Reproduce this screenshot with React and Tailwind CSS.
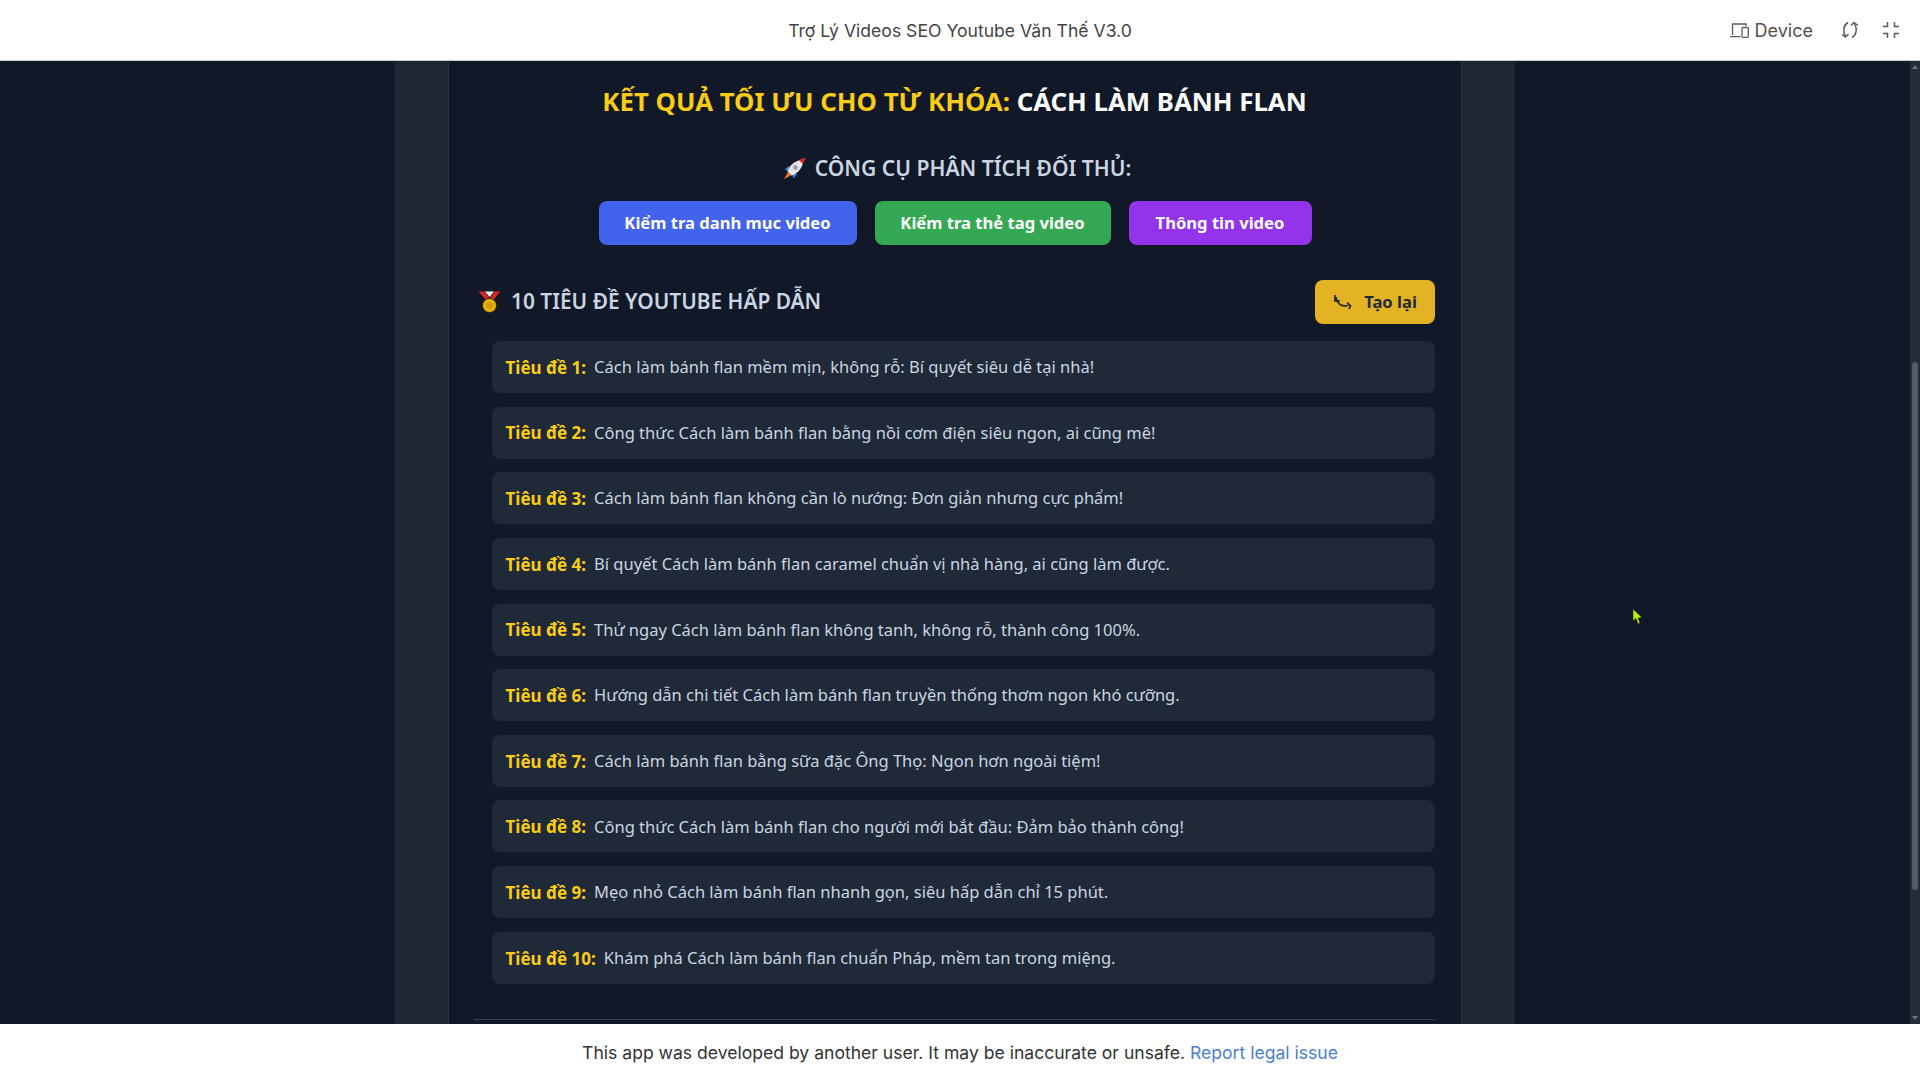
const titles = [
  "Cách làm bánh flan mềm mịn, không rỗ: Bí quyết siêu dễ tại nhà!",
  "Công thức Cách làm bánh flan bằng nồi cơm điện siêu ngon, ai cũng mê!",
  "Cách làm bánh flan không cần lò nướng: Đơn giản nhưng cực phẩm!",
  "Bí quyết Cách làm bánh flan caramel chuẩn vị nhà hàng, ai cũng làm được.",
  "Thử ngay Cách làm bánh flan không tanh, không rỗ, thành công 100%.",
  "Hướng dẫn chi tiết Cách làm bánh flan truyền thống thơm ngon khó cưỡng.",
  "Cách làm bánh flan bằng sữa đặc Ông Thọ: Ngon hơn ngoài tiệm!",
  "Công thức Cách làm bánh flan cho người mới bắt đầu: Đảm bảo thành công!",
  "Mẹo nhỏ Cách làm bánh flan nhanh gọn, siêu hấp dẫn chỉ 15 phút.",
  "Khám phá Cách làm bánh flan chuẩn Pháp, mềm tan trong miệng.",
];

function Rocket() {
  return (
    <svg viewBox="0 0 23 23" className="w-[23px] h-[23px] shrink-0">
      <path d="M5 15 L1 22 L8 18.500 Z" fill="#f97316" />
      <path d="M6 9 L1.500 12.500 L6 14 Z M14 17 L10.500 21.500 L9 17 Z" fill="#3b82f6" />
      <path d="M4.500 14.500 C6 9 11 4.500 17 3 L20 6 C18.500 12 14 17 8.500 18.500 Z" fill="#e5e7eb" />
      <path d="M16 3.200 C18 2 21 1 22.500 0.500 C22 2.500 21 5 19.800 7 Z" fill="#dc2626" />
      <circle cx="12.500" cy="10.500" r="2.400" fill="#9ca3af" />
    </svg>
  );
}

function Medal() {
  return (
    <svg viewBox="0 0 23 22" className="w-[23px] h-[22px] shrink-0">
      <path d="M0.500 0.500 H6.500 L12.500 9 H8 Z M22.500 0.500 H16.500 L10.500 9 H15 Z" fill="#dc2626" stroke="#7f1d1d" strokeWidth="0.500" />
      <path d="M7 0.500 H16 L11.500 6 Z" fill="#f3f4f6" />
      <circle cx="11.500" cy="14.500" r="7" fill="#eab308" stroke="#1c1917" strokeWidth="0.800" />
      <circle cx="11.500" cy="14.500" r="3.500" fill="#d99a07" />
    </svg>
  );
}

function DeviceIcon() {
  return (
    <svg viewBox="0 0 19 15" className="w-[19px] h-[15px]" fill="none" stroke="#5f5a55" strokeWidth="1.300">
      <path d="M2.500 12 V1 H16 V3" />
      <path d="M0 13.600 H10.500" />
      <rect x="12" y="4.500" width="6.300" height="9.800" rx="1" />
    </svg>
  );
}

function RotateIcon() {
  return (
    <svg viewBox="0 0 18 18" className="w-[18px] h-[18px]" fill="none" stroke="#5f5a55" strokeWidth="1.500">
      <path d="M7 1.500 C2.500 4 1.500 10 4.500 15.500" />
      <path d="M1 13.500 L4.500 16 L7.500 13" />
      <path d="M11 16.500 C15.500 14 16.500 8 13.500 2.500" />
      <path d="M10 4.500 L13 1.500 L17 4.500" />
    </svg>
  );
}

function MinimizeIcon() {
  return (
    <svg viewBox="0 0 18 18" className="w-[18px] h-[18px]" fill="none" stroke="#5f5a55" strokeWidth="1.500">
      <path d="M5.500 1 V5.500 H1" />
      <path d="M12.500 1 V5.500 H17" />
      <path d="M5.500 17 V12.500 H1" />
      <path d="M12.500 17 V12.500 H17" />
    </svg>
  );
}

function RegenIcon() {
  return (
    <svg viewBox="0 0 20 16" className="w-[20px] h-[16px]" fill="none" stroke="#1f2937" strokeWidth="1.700">
      <path d="M2 1 V7 H7" />
      <path d="M3 3 C4 10 9 13 15 11.500" />
      <path d="M14 8.500 L17.500 12 L16 15" />
    </svg>
  );
}

function Scrollbar() {
  return (
    <div className="w-[10px] shrink-0 bg-[#252c39] flex flex-col items-center justify-between py-[4px] relative">
      <div className="w-0 h-0 border-x-[3px] border-x-transparent border-b-[4px] border-b-[#6b7280]" />
      <div className="absolute left-[2px] top-[301px] w-[6px] h-[528px] rounded-[3px] bg-[#545b69]" />
      <div className="w-0 h-0 border-x-[3px] border-x-transparent border-t-[4px] border-t-[#6b7280]" />
    </div>
  );
}

export default function App() {
  return (
    <div className="h-screen flex flex-col overflow-hidden relative bg-white font-['Noto_Sans','Open_Sans',sans-serif]">
      <header className="h-[61px] shrink-0 bg-white border-b border-b-[#c9ccd3] flex items-center justify-center relative font-['Inter',sans-serif]">
        <div className="text-[17.600px] text-[#444] pt-[3px]">Trợ Lý Videos SEO Youtube Văn Thế V3.0</div>
        <div className="absolute right-[20px] top-0 h-full flex items-center">
          <div className="flex items-center gap-[6px] text-[18px] text-[#55504b]"><DeviceIcon />Device</div>
          <div className="ml-[28px] mr-[23px]"><RotateIcon /></div>
          <MinimizeIcon />
        </div>
      </header>

      <div className="flex-1 min-h-0 flex bg-[#111827]">
        <div className="flex-1 flex justify-center min-w-0 overflow-hidden">
          <div className="w-[1120px] bg-[#1f2735] px-[53px]">
            <main className="h-full bg-[#111827] border-x border-x-[#2b3341] pl-[25px] pr-[26px] pt-[21px] relative">
              <h1 className="text-center text-[25.800px] leading-[38px] font-bold text-[#facc15]">
                KẾT QUẢ TỐI ƯU CHO TỪ KHÓA: <span className="text-white">CÁCH LÀM BÁNH FLAN</span>
              </h1>
              <h2 className="mt-[33px] pl-[5px] flex items-center justify-center gap-[9px] text-[21.100px] leading-[30px] font-semibold text-[#cbd5e1]">
                <Rocket />CÔNG CỤ PHÂN TÍCH ĐỐI THỦ:
              </h2>
              <div className="mt-[18px] pl-[1px] flex justify-center gap-[18px]">
                <button className="h-[44px] w-[258px] rounded-lg bg-[#4263eb] text-white text-[16.600px] font-bold">Kiểm tra danh mục video</button>
                <button className="h-[44px] w-[236px] rounded-lg bg-[#34a853] text-white text-[16.600px] font-bold">Kiểm tra thẻ tag video</button>
                <button className="h-[44px] w-[183px] rounded-lg bg-[#9333ea] text-white text-[16.600px] font-bold">Thông tin video</button>
              </div>
              <div className="mt-[35px] flex items-center justify-between pl-[4px]">
                <div className="flex items-center gap-[10px] text-[20.900px] font-semibold text-[#cbd5e1]">
                  <Medal />10 TIÊU ĐỀ YOUTUBE HẤP DẪN
                </div>
                <button className="h-[44px] w-[120px] rounded-lg bg-[#e3b323] text-[#1f2937] text-[16.600px] font-bold flex items-center justify-center gap-[11px]">
                  <RegenIcon />Tạo lại
                </button>
              </div>
              <ul className="mt-[17px] ml-[18px] flex flex-col gap-[13.650px]">
                {titles.map((t, i) => (
                  <li key={i} className="h-[52px] rounded-lg bg-[#1f2937] px-[13.500px] pt-[1px] flex items-center text-[16.500px] text-[#cbd5e1] whitespace-nowrap">
                    <strong className="font-bold text-[17px] text-[#facc15] mr-[8px]">Tiêu đề {i + 1}:</strong>{t}
                  </li>
                ))}
              </ul>
              <div className="mt-[35px] h-px bg-[#374151]" />
            </main>
          </div>
        </div>
        <Scrollbar />
      </div>

      <footer className="h-[56px] shrink-0 bg-white flex items-center justify-center pt-[3px] text-[17.570px] text-[#333] font-['Inter',sans-serif]">
        This app was developed by another user. It may be inaccurate or unsafe.&nbsp;<a className="text-[#4a7fd4]">Report legal issue</a>
      </footer>

      <svg viewBox="0 0 10 16" className="absolute left-[1633px] top-[609px] w-[10px] h-[16px]">
        <path d="M0 0 L0 12 L3 9.500 L5 15 L7 14 L5 9 L9 8.500 Z" fill="#b4f000" stroke="#111827" strokeWidth="0.500" />
      </svg>
    </div>
  );
}
